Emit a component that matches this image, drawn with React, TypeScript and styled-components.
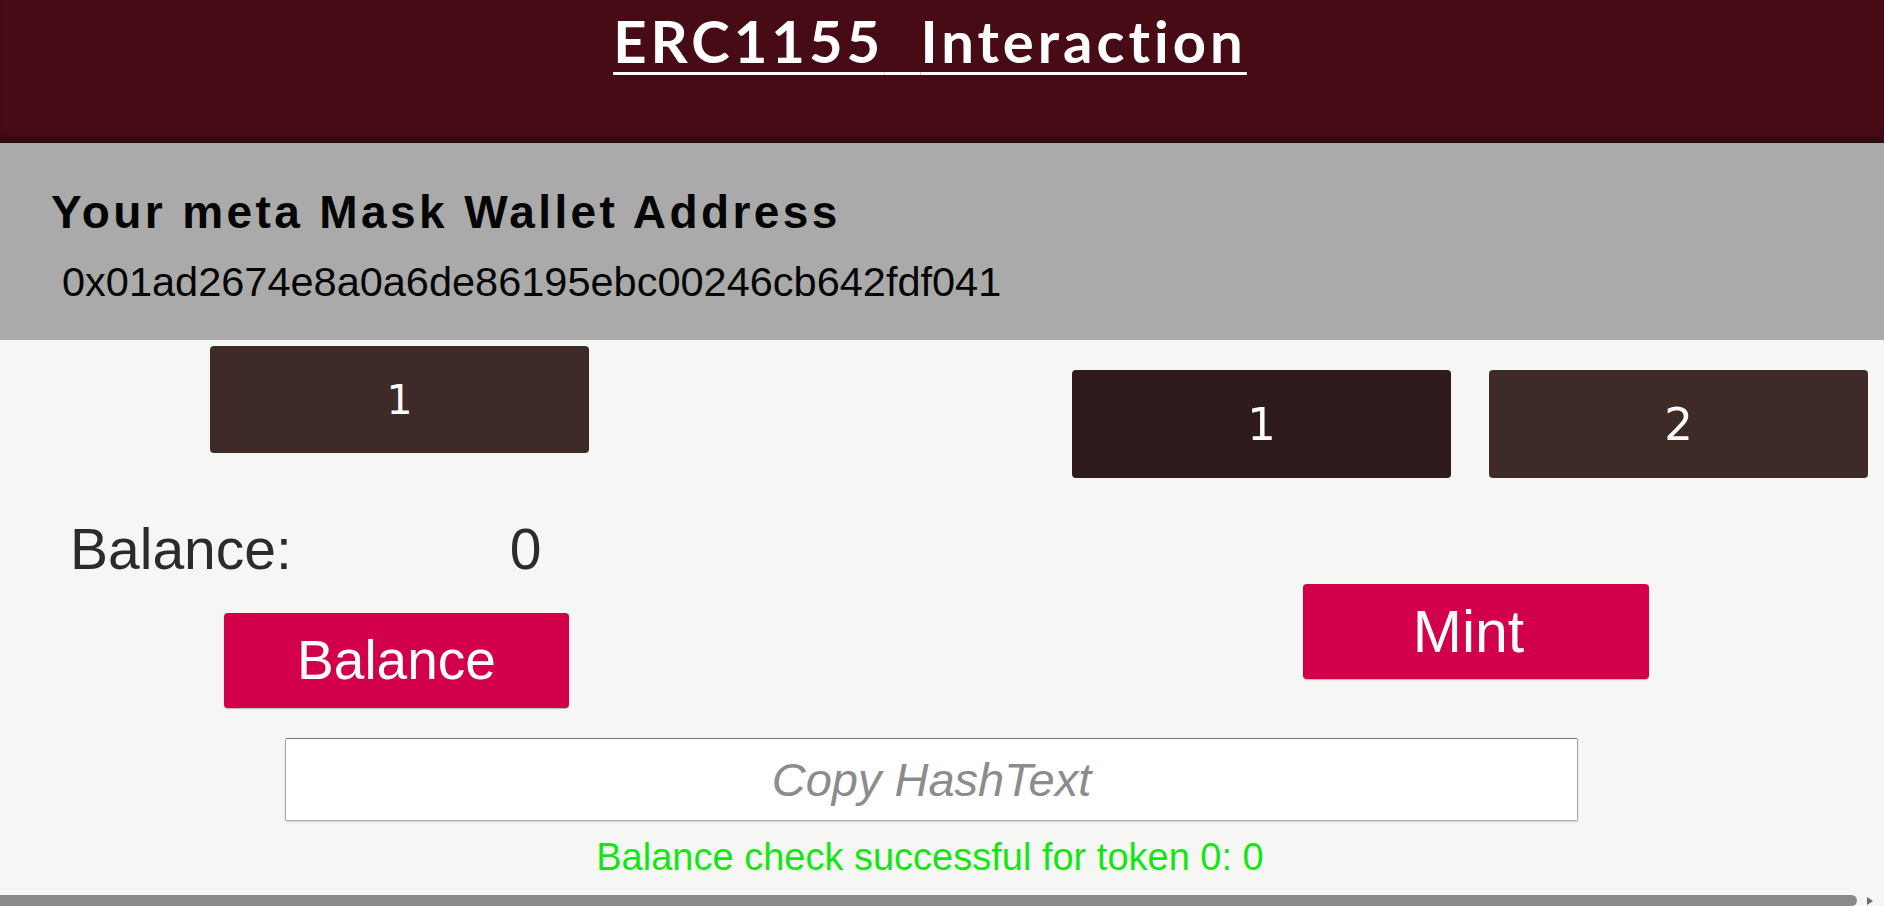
import React from "react";
import styled, { createGlobalStyle } from "styled-components";

const GlobalStyle = createGlobalStyle`
  html, body { margin: 0; padding: 0; }
  body {
    background: #f6f6f4;
    font-family: "Liberation Sans", Arial, sans-serif;
  }
`;

const Page = styled.div`
  min-height: 906px;
`;

const Header = styled.header`
  height: 143px;
  box-sizing: border-box;
  padding: 6px 24px 0 0;
  background: #460b15;
  box-shadow: inset 0 -8px 6px -4px rgba(20, 10, 12, 0.6);
  text-align: center;
`;

const Title = styled.h1`
  margin: 0;
  font-family: Lato, "DejaVu Sans", sans-serif;
  font-weight: 700;
  font-size: 58px;
  line-height: 1.2;
  letter-spacing: 4px;
  color: #ffffff;
  text-decoration: underline;
  text-decoration-thickness: 3px;
  text-underline-offset: 9px;
`;

const WalletSection = styled.section`
  height: 197px;
  box-sizing: border-box;
  padding: 43px 0 0 51px;
  background: #aaaaaa;
`;

const WalletHeading = styled.h2`
  margin: 0;
  font-size: 46px;
  font-weight: 700;
  line-height: 1.15;
  letter-spacing: 3.4px;
  color: #050505;
`;

const Address = styled.p`
  margin: 19px 0 0 11px;
  font-size: 41.5px;
  line-height: 1.15;
  color: #050505;
`;

const Main = styled.main`
  padding-right: 24px;
`;

const Columns = styled.div`
  display: flex;
  height: 368px;
`;

const LeftCol = styled.div`
  flex: none;
  width: 930px;
  display: flex;
  flex-direction: column;
  align-items: flex-start;
`;

const RightCol = styled.div`
  flex: none;
  display: flex;
  flex-direction: column;
  align-items: flex-start;
`;

const TokenInput = styled.input`
  margin: 6px 0 0 210px;
  width: 379px;
  height: 107px;
  box-sizing: border-box;
  border: none;
  border-radius: 4px;
  background: #3e2b27;
  color: #ffffff;
  caret-color: #ffffff;
  text-align: center;
  font-family: "DejaVu Sans", sans-serif;
  font-size: 41px;
  outline: none;
  padding: 0;
`;

const BalanceRow = styled.div`
  margin: 64px 0 0 70px;
  display: flex;
  gap: 218px;
  font-size: 57px;
  line-height: 1.15;
  color: #2b2b2b;
`;

const ActionButton = styled.button<{ $w: number; $size: number; $shift?: number }>`
  width: ${(p) => p.$w}px;
  height: 95px;
  border: none;
  border-radius: 4px;
  background: #d2004a;
  box-shadow: 0 1px 1px rgba(0, 0, 0, 0.25);
  color: #ffffff;
  font-family: "Liberation Sans", Arial, sans-serif;
  font-size: ${(p) => p.$size}px;
  padding: 0 ${(p) => p.$shift ?? 0}px 0 0;
  cursor: pointer;
`;

const BalanceButton = styled(ActionButton)`
  margin: 30px 0 0 224px;
`;

const MintButton = styled(ActionButton)`
  margin: 106px 0 0 373px;
`;

const TokenRow = styled.div`
  margin: 30px 0 0 142px;
  display: flex;
  gap: 38px;
`;

const TokenButton = styled.button<{ $active?: boolean }>`
  width: 379px;
  height: 108px;
  border: none;
  border-radius: 4px;
  background: ${(p) => (p.$active ? "#2f1a1d" : "#3e2b27")};
  color: #ffffff;
  font-family: "DejaVu Sans", sans-serif;
  font-size: 45px;
  padding: 0;
  cursor: pointer;
`;

const HashInput = styled.input`
  display: block;
  margin: 30px 0 0 285px;
  width: 1293px;
  height: 83px;
  box-sizing: border-box;
  border: 1px solid #a8a8a8;
  border-top-color: #777777;
  border-radius: 2px;
  background: #ffffff;
  box-shadow: 0 1px 2px rgba(0, 0, 0, 0.15);
  text-align: center;
  font-family: "Liberation Sans", Arial, sans-serif;
  font-size: 47px;
  outline: none;
  &::placeholder {
    color: #8c8c8c;
    font-style: italic;
  }
`;

const Status = styled.p`
  margin: 15px 0 0;
  text-align: center;
  font-size: 38px;
  line-height: 1.15;
  color: #14e614;
`;

const ScrollBar = styled.div`
  position: fixed;
  left: 0;
  right: 0;
  bottom: 0;
  height: 11px;
  display: flex;
  align-items: center;
  gap: 10px;
`;

const ScrollThumb = styled.div`
  width: 1857px;
  height: 11px;
  border-radius: 0 6px 6px 0;
  background: #8a8a8a;
`;

const ScrollArrow = styled.div`
  width: 0;
  height: 0;
  border-top: 4px solid transparent;
  border-bottom: 4px solid transparent;
  border-left: 6px solid #6a6a6a;
`;

export default function App() {
  return (
    <Page>
      <GlobalStyle />
      <Header>
        <Title>ERC1155{"\u00a0\u00a0"}Interaction</Title>
      </Header>
      <WalletSection>
        <WalletHeading>Your meta Mask Wallet Address</WalletHeading>
        <Address>0x01ad2674e8a0a6de86195ebc00246cb642fdf041</Address>
      </WalletSection>
      <Main>
        <Columns>
          <LeftCol>
            <TokenInput defaultValue="1" autoFocus />
            <BalanceRow>
              <span>Balance:</span>
              <span>0</span>
            </BalanceRow>
            <BalanceButton $w={345} $size={55}>
              Balance
            </BalanceButton>
          </LeftCol>
          <RightCol>
            <TokenRow>
              <TokenButton $active>1</TokenButton>
              <TokenButton>2</TokenButton>
            </TokenRow>
            <MintButton $w={346} $size={59} $shift={15}>
              Mint
            </MintButton>
          </RightCol>
        </Columns>
        <HashInput placeholder="Copy HashText" />
        <Status>Balance check successful for token 0: 0</Status>
      </Main>
      <ScrollBar>
        <ScrollThumb />
        <ScrollArrow />
      </ScrollBar>
    </Page>
  );
}
